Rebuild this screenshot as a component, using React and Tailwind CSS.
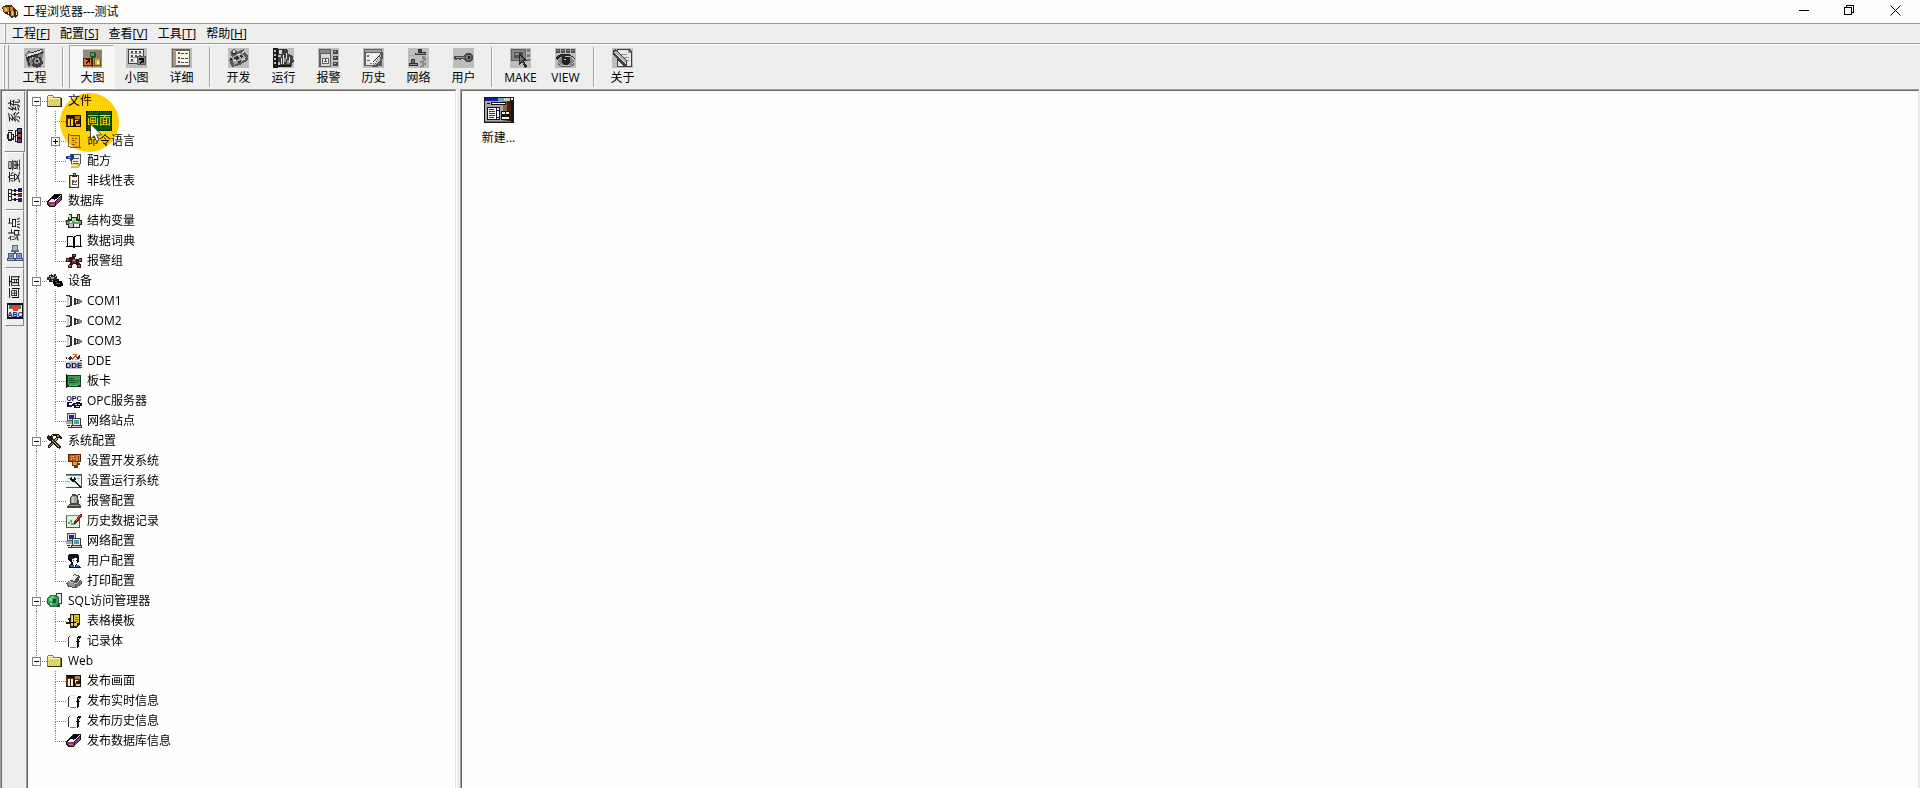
import { useState } from "react";
import clsx from "clsx";

/* ---------- 16px tree icons ---------- */

const glyphs = {
    folder: (
        <>
            <path d="M0 3l1-1h5l1 2h7v10H0z" fill="#8a7a20" />
            <path d="M1 3h4l1 2h7v8H1z" fill="#e8d878" />
            <path d="M1 3h4l1 1H1zM1 5h12v1H1z" fill="#fff6b8" />
            <path d="M3 7h1v1H3zM5 7h1v1H5zM7 7h1v1H7zM9 7h1v1H9zM11 7h1v1h-1zM2 9h1v1H2zM4 9h1v1H4zM6 9h1v1H6zM8 9h1v1H8zM10 9h1v1h-1zM3 11h1v1H3zM5 11h1v1H5zM7 11h1v1H7zM9 11h1v1H9zM11 11h1v1h-1z" fill="#c8b850" />
            <path d="M14 5h1v9H1v-1h13z" fill="#302808" />
        </>
    ),
    picture: (
        <>
            <path d="M0 2h15v12H0z" fill="#5a3418" />
            <path d="M1 3h8v2H1z" fill="#1c1008" />
            <path d="M2 6h2v7H2zM5 6h2v7H5z" fill="#fff4e0" />
            <path d="M4 7h1v6H4z" fill="#30180c" />
            <path d="M9 3h5v3H9z" fill="#b88050" />
            <path d="M7 6h2v7H7z" fill="#140c04" />
            <path d="M9 7h3v3H9z" fill="#fff4e0" />
            <path d="M10 8h4v3h-4z" fill="#382010" />
            <path d="M10 11h4v2h-4z" fill="#f0c898" />
            <path d="M0 13h15v1H0zM14 2h1v12h-1zM0 2h15v1H0z" fill="#100800" />
        </>
    ),
    script: (
        <>
            <path d="M2 1h2v1h10v11l1 2H4v-1H2z" fill="#806838" />
            <path d="M4 3h9v10H4z" fill="#f4e4b0" />
            <path d="M3 2h1v11H3z" fill="#fff8d8" />
            <path d="M4 14h9v-1H4z" fill="#d8c080" />
            <path d="M6 5h2v1H6zM9 5h2v1H9zM6 7h3v1H6zM7 9h1v1H7zM9 9h2v1H9zM6 11h3v1H6z" fill="#8a6c30" />
        </>
    ),
    recipe: (
        <>
            <path d="M4 1h11v9l-2 5H5z" fill="#505050" />
            <path d="M6 2h8v8l-2 4H6z" fill="#f0ecd0" />
            <path d="M8 5h5v1H8zM7 8h5v1H7zM7 10h6v1H7z" fill="#506090" />
            <path d="M0 3h3l3-2 2 2v3L5 8 3 6H0z" fill="#1c3c88" />
            <path d="M2 4h3v1H2z" fill="#70b0e8" />
            <path d="M5 11h7l2 2-2 2H5z" fill="#d8c070" />
            <path d="M5 12h6v1H5z" fill="#fff8d0" />
        </>
    ),
    clipboard: (
        <>
            <path d="M3 2h10v13H3z" fill="#403020" />
            <path d="M4 3h8v11H4z" fill="#f8f8f0" />
            <path d="M4 3h1v11H4z" fill="#d0b070" />
            <path d="M7 0h3v2h1v2H6V2h1z" fill="#303030" />
            <path d="M8 1h1v1H8z" fill="#fff" />
            <path d="M6 7h1v5H6zM6 11h5v1H6z" fill="#50507c" />
            <path d="M7 7h1v1h1v1H8v1H7zM10 7h1v2h-1v1H9V8h1z" fill="#a04868" />
        </>
    ),
    database: (
        <>
            <path d="M7 1h8v5l-7 8H2l-2-2v-3z" fill="#180818" />
            <path d="M1 9h7v4H3l-2-2z" fill="#883878" />
            <path d="M9 9l5-6v3l-5 7z" fill="#903c80" />
            <path d="M1 9l4-4 2 2 5-5h2L8 9z" fill="#f8f0f8" />
            <path d="M7 2h6L9 6H4z" fill="#000" />
            <path d="M3 11h4v1H3z" fill="#c07868" />
        </>
    ),
    struct: (
        <>
            <path d="M3 1h3v3h5V1h3v6h2v5h-2v3H2v-3H0V7h2V4h1z" fill="#202820" />
            <path d="M3 2h2v4H3zM12 2h1v4h-1z" fill="#d8e070" />
            <path d="M1 8h14v3H1z" fill="#50a868" />
            <path d="M4 8h2v2H4zM9 8h3v1H9z" fill="#e8f0e0" />
            <path d="M3 11h4v3H3z" fill="#d8b8c8" />
            <path d="M8 11h5v3H8z" fill="#f0f0f0" />
            <path d="M6 5h4v3H6z" fill="#a8d8b0" />
            <path d="M6 2h4v2H6z" fill="#fefefc" />
        </>
    ),
    book: (
        <>
            <path d="M1 3h5l1 1 1-1h1l1-1h4l1 1v10h1v1H9v1H7v-1H0v-1h1z" fill="#000" />
            <path d="M2 4h4l1 1v8H2zM9 4l1-1h3l1 1v9H9z" fill="#fff" />
            <path d="M3 12h3v1H3zM10 12h3v1h-3z" fill="#b0b0b0" />
        </>
    ),
    group: (
        <>
            <path d="M6 1h4v3H9v2h4V5h3v4h-3v1l2 2v3h-4v-3l-2-1H7l-1 1v3H2v-3l2-2V9H0V5h3V4h3z" fill="#301018" />
            <path d="M7 2h2v1H7zM1 6h2v2H1zM13 6h2v2h-2zM3 12h2v2H3zM12 12h2v2h-2z" fill="#a06070" />
            <path d="M6 6h4v4H6z" fill="#783040" />
            <path d="M7 7h2v1H7z" fill="#e0a0a8" />
        </>
    ),
    device: (
        <>
            <path d="M2 2h2V1h1v1h2V1h2v2h1v4H8v2H2V7H0V4h2z" fill="#282828" />
            <path d="M4 4h3v2H4zM2 5h1v1H2zM6 2h1v1H6z" fill="#a0a0a0" />
            <path d="M3 3h1v1H3zM8 3h1v1H8zM5 7h1v1H5z" fill="#d0d0d0" />
            <path d="M7 7h3V6h2v2h3v2h1v3h-2v1h-4v-1H7v-2H6V9h1z" fill="#000" />
            <path d="M9 10h4v1H9z" fill="#707070" />
            <path d="M8 8h2v1H8z" fill="#505050" />
        </>
    ),
    com: (
        <>
            <path d="M0 2h4v1h2v10H4v1H0v-1h1V3H0z" fill="#303030" />
            <path d="M1 3h2v10H1z" fill="#d0d0d0" />
            <path d="M3 4h1v8H3z" fill="#f8f8f8" />
            <path d="M8 5h2v1h2v1h1v3h-1v1h-2v1H8z" fill="#303030" />
            <path d="M10 7h1v3h-1z" fill="#f0f0f0" />
            <path d="M12 6h2v1h2v3h-2v1h-2z" fill="#808080" />
        </>
    ),
    dde: (
        <>
            <path d="M2 5l2-2 2 2-2 3zM12 3l2-1v2l-1 3-2-1z" fill="#303020" />
            <path d="M5 6l4-4 1 1-3 4zM7 1h4v4h-1V2H7z" fill="#d05818" />
            <path d="M9 6h4v1H9zM13 5h2v1h-2z" fill="#d8b040" />
            <path d="M0 4h1v2H0zM14 7h2v1h-2z" fill="#202050" />
            <path d="M1 9h1V8h13v1h1v6h-1v1H1z" fill="#c8c8d8" />
            <text x="8" y="15" textAnchor="middle" fontSize="8" fontWeight="700" fontFamily="Liberation Sans, sans-serif" fill="#08083c">DDE</text>
        </>
    ),
    board: (
        <>
            <path d="M0 1h1v14H0z" fill="#101010" />
            <path d="M1 2h14v12H1z" fill="#0c4018" />
            <path d="M2 3h12v9H2z" fill="#38a048" />
            <path d="M3 5h5v1H3zM3 7h7v1H3zM3 9h6v1H3zM10 9l3-3v1l-3 3z" fill="#184c20" />
            <path d="M3 12h9v1H3z" fill="#78b850" />
        </>
    ),
    opc: (
        <>
            <path d="M1 9h5v1H3v3h3v1H1zM7 10h3V9h4v1h2v3h-2v2H8v-2H6v-2h1z" fill="#101030" />
            <path d="M9 11h2v1H9zM12 11h2v1h-2zM10 13h3v1h-3z" fill="#d8d8e0" />
            <path d="M2 12h4v2H2z" fill="#18205c" />
            <text x="8" y="8" textAnchor="middle" fontSize="7" fontWeight="700" fontFamily="Liberation Sans, sans-serif" fill="#08083c">OPC</text>
        </>
    ),
    network: (
        <>
            <path d="M1 0h9v8H1z" fill="#485058" />
            <path d="M2 1h7v6H2z" fill="#e0e0e0" />
            <path d="M3 2h5v4H3z" fill="#1828a0" />
            <path d="M0 8h6v3H0z" fill="#a0a8a8" />
            <path d="M6 5h9v8H6z" fill="#384048" />
            <path d="M7 6h7v6H7z" fill="#e8e8e0" />
            <path d="M8 7h5v4H8z" fill="#50a0a8" />
            <path d="M5 12h11v3H5z" fill="#384040" />
            <path d="M6 13h9v1H6z" fill="#c8c8c0" />
            <path d="M1 12h3v1H1zM2 14h3v1H2z" fill="#202020" />
        </>
    ),
    tools: (
        <>
            <path d="M5 1h5l3 1 2 3-1 2-2-2h-2L9 3 6 3z" fill="#181408" />
            <path d="M10 2h2v2h-2z" fill="#908040" />
            <path d="M9 4l2 2-8 9H1v-2z" fill="#282010" />
            <path d="M9 5l1 1-7 8H2z" fill="#b8a060" />
            <path d="M1 2l2 2 1-2 2 1v3l8 8-1 2-3-1-6-7H2L0 5z" fill="#202020" />
            <path d="M5 7l8 7h-1L5 8z" fill="#b8b8a0" />
        </>
    ),
    devset: (
        <>
            <path d="M2 1h13v8H2z" fill="#5c2008" />
            <path d="M3 2h7v6H3z" fill="#c85020" />
            <path d="M5 3h3v1H5zM5 5h1v2H5zM7 5h2v1H7z" fill="#f0b040" />
            <path d="M10 2h4v6h-4z" fill="#e08830" />
            <path d="M12 3h1v5h-1z" fill="#80380c" />
            <path d="M6 8h6v2h2v2h-2v3H8v-2H6z" fill="#6c3c08" />
            <path d="M7 9h4v3H7z" fill="#e0a040" />
        </>
    ),
    runset: (
        <>
            <path d="M0 1h16v14H0z" fill="#405858" />
            <path d="M0 2h15v12H0z" fill="#ecf6f0" />
            <path d="M0 2h15v1H0z" fill="#58a088" />
            <path d="M2 5h2v1H2zM1 8h3v1H1zM11 5h3v1h-3z" fill="#80b8a0" />
            <path d="M5 4h1v2h2V4h1l1 2-1 2 6 6-1 1L8 9H6L4 7z" fill="#101010" />
        </>
    ),
    bell: (
        <>
            <path d="M6 1h4v1h2v2l1 6 2 3v2H1v-2l3-3V4l2-2z" fill="#484440" />
            <path d="M6 3h4v1h1v6H5V4h1z" fill="#a8a498" />
            <path d="M6 4h2v6H6z" fill="#d0ccc0" />
            <path d="M3 12h10v1H3z" fill="#a89868" />
            <path d="M12 1h2v1h-2zM14 3h1v2h-1z" fill="#282828" />
        </>
    ),
    history: (
        <>
            <path d="M0 2h14v13H0z" fill="#486050" />
            <path d="M1 3h12v11H1z" fill="#dcf4dc" />
            <path d="M0 2h13v1H0z" fill="#58a878" />
            <path d="M2 9h2V7h2v3h2V8h3v1H9v3H5V9H4v2H2z" fill="#60a880" />
            <path d="M14 1h2v2l-6 8H8V9z" fill="#702018" />
            <path d="M14 2h1l-5 7V8z" fill="#d86040" />
        </>
    ),
    user: (
        <>
            <path d="M3 1h9l1 2v6h-1v1h-1v2h2l2 3H3v-3l2-2-1-3-1 1-1-2V3z" fill="#101418" />
            <path d="M6 5h5v5l-2 2H7z" fill="#fff" />
            <path d="M5 4h3v2H5zM7 7h1v1H7zM10 7h1v1h-1z" fill="#202020" />
            <path d="M4 12h3l1 2H4zM10 12h3v2h-3z" fill="#3868a8" />
            <path d="M8 12h1v2H8z" fill="#fff" />
        </>
    ),
    printer: (
        <>
            <path d="M8 1l6 2-1 4 3 1v3l-6 4-8-1-2-4 5-3z" fill="#505050" />
            <path d="M8 2l4 1-3 5-4-1z" fill="#e8e8e8" />
            <path d="M1 9l8 2v3l-6-1z" fill="#989898" />
            <path d="M10 11l5-3v3l-5 3z" fill="#707070" />
            <path d="M3 8l7 2 4-3v1l-4 3-8-2z" fill="#d0d0d0" />
            <path d="M11 4h1v1h-1zM9 6h1v1H9z" fill="#303030" />
        </>
    ),
    sql: (
        <>
            <path d="M9 0h6v11h-2v3H9z" fill="#304048" />
            <path d="M10 1h4v9h-4z" fill="#d8e8f0" />
            <path d="M3 2h7l2 3v6l-3 3H3l-3-3V5z" fill="#306048" />
            <path d="M3 3h6l2 3v4l-2 3H4l-3-3V6z" fill="#30a850" />
            <path d="M2 5h3v3H2zM4 3h3v2H4z" fill="#88c0c8" />
            <path d="M6 6h3v4H6z" fill="#105828" />
            <path d="M3 10h2v2H3z" fill="#98d890" />
        </>
    ),
    template: (
        <>
            <path d="M4 1h10v10l-3 4H4v-4H0V9h3V7H2V5h2z" fill="#282008" />
            <path d="M5 2h8v8h-2v3H5z" fill="#e8c840" />
            <path d="M9 4h3v1H9zM9 6h4v1H9zM9 8h3v1H9z" fill="#907818" />
            <path d="M6 3h1v9H6z" fill="#fff8b0" />
            <path d="M7 1h1v14H7zM4 9h6v1H4z" fill="#000" />
        </>
    ),
    record: (
        <>
            <path d="M2 4h1v10H2zM3 3h1v1H3z" fill="#303030" />
            <path d="M4 14h6v1H4z" fill="#808080" />
            <path d="M11 4h1V3h3v2h-1v1h-1v2h1v1h-1v5h-1v1h-1V9h-1V8h1z" fill="#101010" />
            <path d="M12 5h1v1h-1z" fill="#fff" />
            <path d="M4 3h6V2H4z" fill="#e0e0e0" />
        </>
    ),
    tabSystem: (
        <>
            <path d="M1 4h4v2h2v6H5v1H1v-2H0V6h1z" fill="#202020" />
            <path d="M2 5h2v6H2zM5 7h1v3H5z" fill="#e8e8e8" />
            <path d="M1 2h5v1H1zM6 8h2V2h3v1H9v4h2v1H9v5h2v1H8V9H6z" fill="#202020" />
            <path d="M10 0h5v5h-5zM10 5h5v5h-5zM10 10h5v5h-5z" fill="#181020" />
            <path d="M11 1h3v3h-3z" fill="#4858b0" />
            <path d="M11 6h3v3h-3z" fill="#b84840" />
            <path d="M11 11h3v3h-3z" fill="#783888" />
        </>
    ),
    tabVariable: (
        <>
            <path d="M1 2h4v12H1zM5 3h7v1H5zM5 7h7v1H5zM5 12h7v1H5z" fill="#282828" />
            <path d="M2 3h2v3H2zM2 7h2v2H2zM2 10h2v3H2z" fill="#f0f0f0" />
            <path d="M7 2h2v3H7zM7 6h2v3H7zM7 11h2v3H7z" fill="#181818" />
            <path d="M11 1h4v4h-4z" fill="#182060" />
            <path d="M11 6h4v4h-4z" fill="#802028" />
            <path d="M11 11h4v4h-4z" fill="#202868" />
        </>
    ),
    tabStation: (
        <>
            <path d="M5 0h6v5h1v2H4V5h1z" fill="#587080" />
            <path d="M6 1h4v4H6z" fill="#98c0c8" />
            <path d="M7 7h2v2H7z" fill="#505860" />
            <path d="M1 8h6v5h1v3H0v-3h1zM9 8h6v5h1v3H8v-3h1z" fill="#485080" />
            <path d="M2 9h4v4H2zM10 9h4v4h-4z" fill="#90a8c8" />
            <path d="M3 10h2v2H3zM11 10h2v2h-2z" fill="#5068a0" />
            <path d="M1 14h6v1H1zM9 14h6v1H9z" fill="#b8c0d0" />
        </>
    ),
    tabPicture: (
        <>
            <path d="M0 0h16v16H0z" fill="#101028" />
            <path d="M1 2h14v12H1z" fill="#f0f0f8" />
            <path d="M2 2h12v4H2z" fill="#309048" />
            <path d="M5 3h7v3h-1v2H6V6H5z" fill="#d84828" />
            <text x="8" y="14" textAnchor="middle" fontSize="7" fontWeight="700" fontFamily="Liberation Sans, sans-serif" fill="#101878">ABC</text>
        </>
    ),
    app: (
        <>
            <path d="M0 3l4-2h6l2 3 2 1 2 3v3l-2 3-2-1-3 1-2-3-4-1-2-3z" fill="#50300c" />
            <path d="M1 3h6v5H2z" fill="#c88020" />
            <path d="M3 4h2v3H3z" fill="#f0c868" />
            <path d="M8 3h3v4H8z" fill="#c88828" />
            <path d="M9 7h4v5H9z" fill="#d09030" />
            <path d="M10 8h1v3h-1zM14 7h1v4h-1zM6 8h1v2H6z" fill="#fae0a0" />
            <path d="M7 4h1v6H7zM5 8h1v2H5zM12 6h1v7h-1z" fill="#301800" />
        </>
    ),
};

function Glyph({ name }) {
    return (
        <svg className="size-4 shrink-0" viewBox="0 0 16 16" shapeRendering="crispEdges" aria-hidden="true">
            {glyphs[name]}
        </svg>
    );
}

/* ---------- toolbar icons, grey face ---------- */

const toolGlyphs = {
    project: (
        <>
            <path d="M1 6l3-3 4 1 11-3 1 4-4 11-12 3z" fill="#808080" />
            <path d="M3 6l15-4-3 5-12 5z" fill="#d8d8d8" />
            <path d="M2 9l17-5v1L5 11l1 7H5z" fill="#303030" />
            <path d="M4 3l4 1 10-3v1L8 5 4 4z" fill="#404040" />
            <path d="M11 7h3v2h2l2 1-1 2 2 1v3l-2 1v2h-3l-1 1-2-1H9l-1-2 1-2-1-2 1-2 2-1z" fill="#404040" />
            <path d="M11 10h4v2h1v3h-2v1h-3v-1h-1v-3h1z" fill="#989898" />
            <path d="M12 12h2v2h-2z" fill="#202020" />
        </>
    ),
    large: (
        <>
            <path d="M1 1h19v18H1z" fill="#988c78" />
            <path d="M12 1h8v9h-8z" fill="#907c60" />
            <path d="M8 3h5v1h1v4h-1v1H9V8H8z" fill="#185828" />
            <path d="M9 4h3v3H9z" fill="#40a858" />
            <path d="M10 9h1v10h-1zM1 10h19v1H1z" fill="#302010" />
            <path d="M1 9h9v9H1z" fill="#682010" />
            <path d="M2 10h7v7H2z" fill="#e07038" />
            <path d="M4 11h4v4H7v-2l-3 3v-2l2-2H4z" fill="#100800" />
            <path d="M12 10h7v8h-7z" fill="#705010" />
            <path d="M13 11h5v6h-5z" fill="#d8b040" />
            <path d="M15 13h2v3h-2z" fill="#fff0a0" />
        </>
    ),
    small: (
        <>
            <path d="M2 1h16v15H2z" fill="#404040" />
            <path d="M3 2h14v13H3z" fill="#ececec" />
            <path d="M5 3h2v2H5zM9 3h2v2H9zM13 3h2v2h-2zM5 7h2v2H5zM9 7h2v2H9zM5 11h2v2H5zM13 7h2v2h-2z" fill="#505050" />
            <path d="M4 5h4v1H4zM8 5h4v1H8zM12 5h4v1h-4zM4 9h8v1H4zM4 13h4v1H4z" fill="#a0a0a0" />
            <path d="M11 8h9v9h-9z" fill="#585858" />
            <path d="M12 9h7v7h-7z" fill="#888" />
            <path d="M13 10h5v5h-1v-2l-3 3v-2l2-2h-3z" fill="#000" />
        </>
    ),
    detail: (
        <>
            <path d="M1 1h18v18H1z" fill="#686460" />
            <path d="M5 3h13v14H5z" fill="#f8f4ec" />
            <path d="M2 2h3v16H2z" fill="#a89880" />
            <path d="M7 4h2v2H7zM7 9h2v2H7z" fill="#904838" />
            <path d="M7 13h2v2H7z" fill="#385078" />
            <path d="M10 5h3v1h-3zM14 5h3v1h-3zM10 10h3v1h-3zM14 10h3v1h-3zM10 14h3v1h-3zM14 14h3v1h-3z" fill="#484848" />
        </>
    ),
    develop: (
        <>
            <path d="M2 4l4-3 3 3 7-3 1 4 3 2v5l-8 5-8 2-3-7 3-3z" fill="#585858" />
            <path d="M4 9l8-4 6 4-5 5-7 3z" fill="#a8a8a8" />
            <path d="M6 9l3-1 2 2-2 2-3-1zM12 7l3 1-1 2-2-1zM10 13l3-1v2l-3 1z" fill="#303030" />
            <path d="M5 12h3v1H5zM9 6h3v1H9zM14 11h3v1h-3z" fill="#e8e8e8" />
            <path d="M5 2h2v3H5zM16 2l1 1-3 3-1-1z" fill="#d0d0d0" />
            <path d="M4 5h4v1H4zM2 10h2v2H2z" fill="#202020" />
        </>
    ),
    run: (
        <>
            <path d="M0 0h5v20H0z" fill="#181818" />
            <path d="M1 2h2v2H1zM1 6h2v2H1zM1 10h2v2H1zM1 14h2v2H1z" fill="#c0c0c0" />
            <path d="M5 1h9v6H5z" fill="#383838" />
            <path d="M6 2h3v4H6z" fill="#d0d0d0" />
            <path d="M10 5h2V2h3v4l3 1 2 1v3l1 2-2 2v3H7v-4H5V9h3V6z" fill="#404040" />
            <path d="M10 7h1v9h-1zM13 5h1v6h-1zM16 9h1v6h-1zM8 10h1v6H8z" fill="#d8d8d8" />
            <path d="M11 10h2v4h-2zM14 12h2v4h-2z" fill="#909090" />
            <path d="M5 17h13v2H5z" fill="#181818" />
        </>
    ),
    alarm: (
        <>
            <path d="M1 1h12v18H1z" fill="#606060" />
            <path d="M2 2h10v3H2z" fill="#888" />
            <path d="M3 6h9v12H3z" fill="#d8d8d8" />
            <path d="M4 10h7v6H4z" fill="#606060" />
            <path d="M5 11h5v4H5z" fill="#f4f4f4" />
            <path d="M7 11h1v3H7zM6 13h3v1H6z" fill="#484848" />
            <path d="M15 2h5v4h-5zM15 8h5v4h-5zM15 14h5v4h-5z" fill="#484848" />
            <path d="M16 3h2v1h-2zM16 9h2v1h-2zM16 15h2v1h-2z" fill="#b0b0b0" />
        </>
    ),
    trend: (
        <>
            <path d="M1 1h18v17H1z" fill="#606060" />
            <path d="M3 5h14v12H3z" fill="#e8e8e8" />
            <path d="M2 2h16v2H2z" fill="#a0a0a0" />
            <path d="M4 7h2v2H4zM4 12h3v1H4zM7 15h4v1H7z" fill="#707070" />
            <path d="M9 6h4v1h3l-4 6-2 3-3-1V9z" fill="#f4f4f4" />
            <path d="M19 4h1v6l-2 5-4 4H9l4-5z" fill="#585858" />
            <path d="M18 6l-1 6-5 5 2-4z" fill="#c8c8c8" />
            <path d="M17 7l-7 7 1-2z" fill="#202020" />
        </>
    ),
    net: (
        <>
            <path d="M10 1h4v3h4v3H7V5h3z" fill="#383838" />
            <path d="M8 5h9v1H8z" fill="#888" />
            <path d="M3 11h4v4h3v3H1v-3h2z" fill="#303030" />
            <path d="M4 12h2v3H4z" fill="#707070" />
            <path d="M14 8h3v2h1v3h-2v2h2v2h-2v2h-4v-1h2v-3h-2v-2h3v-2h-1z" fill="#888" />
            <path d="M2 16h7v1H2z" fill="#909090" />
            <path d="M1 7h5v1H1z" fill="#a8a8a8" />
        </>
    ),
    key: (
        <>
            <path d="M13 5h4l3 2v5l-3 2h-4l-2-3H8v1H6v-1H4v1H2v-1H1V8h10z" fill="#484848" />
            <path d="M13 7h5v5h-5z" fill="#787878" />
            <path d="M3 9h9v1H3z" fill="#989898" />
            <path d="M15 8h2v3h-2z" fill="#282828" />
        </>
    ),
    make: (
        <>
            <path d="M1 1h15v12H1z" fill="#606060" />
            <path d="M2 2h13v10H2z" fill="#888" />
            <path d="M4 4h9v6H4z" fill="#505050" />
            <path d="M5 5h5v2H5z" fill="#909090" />
            <path d="M17 1h3v3h-3zM17 6h3v3h-3zM17 11h3v2h-3z" fill="#787878" />
            <path d="M9 5l8 8h-3l3 5-2 2-3-6-3 3z" fill="#282828" />
            <path d="M10 8l4 4h-2l3 6-3-5-2 1z" fill="#707070" />
        </>
    ),
    view: (
        <>
            <path d="M1 1h4v4H1zM6 1h4v4H6zM11 1h4v4h-4zM16 1h4v4h-4z" fill="#505050" />
            <path d="M2 2h2v1H2zM7 2h2v1H7zM12 2h2v1h-2zM17 2h2v1h-2z" fill="#909090" />
            <path d="M1 9l5-3h8l6 4v2l-3-3-3-1-8 1-4 3z" fill="#282828" />
            <path d="M2 13l4-4h9l4 4-4 4H7z" fill="#808080" />
            <path d="M7 9h8v6l-3 2H9l-2-3z" fill="#202020" />
            <path d="M9 11h2v1H9z" fill="#d0d0d0" />
            <path d="M3 15l4 3h8l4-3v2l-4 2H7l-4-2z" fill="#606060" />
        </>
    ),
    about: (
        <>
            <path d="M5 1h12l3 3v15H5z" fill="#404040" />
            <path d="M6 2h10v3h3v13H6z" fill="#e8e8e8" />
            <path d="M16 2v3h3z" fill="#909090" />
            <path d="M9 6h6v1H9zM11 9h6v1h-6zM13 12h4v1h-4z" fill="#909090" />
            <path d="M1 2l3-1 11 12v5h-4L1 6z" fill="#404040" />
            <path d="M2 4l2-2 10 11-2 2z" fill="#b0b0b0" />
            <path d="M3 4l9 10h-1L2 5zM12 15l2-2v4z" fill="#e0e0e0" />
        </>
    ),
};

const toolGroups = [
    [{ id: "project", label: "工程" }],
    [
        { id: "large", label: "大图" },
        { id: "small", label: "小图" },
        { id: "detail", label: "详细" },
    ],
    [
        { id: "develop", label: "开发" },
        { id: "run", label: "运行" },
        { id: "alarm", label: "报警" },
        { id: "trend", label: "历史" },
        { id: "net", label: "网络" },
        { id: "key", label: "用户" },
    ],
    [
        { id: "make", label: "MAKE" },
        { id: "view", label: "VIEW" },
    ],
    [{ id: "about", label: "关于" }],
];

const menus = [
    { label: "工程", accel: "F" },
    { label: "配置", accel: "S" },
    { label: "查看", accel: "V" },
    { label: "工具", accel: "T" },
    { label: "帮助", accel: "H" },
];

const sideTabs = [
    { label: "系统", icon: "tabSystem" },
    { label: "变量", icon: "tabVariable" },
    { label: "站点", icon: "tabStation" },
    { label: "画面", icon: "tabPicture" },
];

const tree = [
    {
        label: "文件",
        icon: "folder",
        children: [
            { label: "画面", icon: "picture" },
            { label: "命令语言", icon: "script", collapsed: true },
            { label: "配方", icon: "recipe" },
            { label: "非线性表", icon: "clipboard" },
        ],
    },
    {
        label: "数据库",
        icon: "database",
        children: [
            { label: "结构变量", icon: "struct" },
            { label: "数据词典", icon: "book" },
            { label: "报警组", icon: "group" },
        ],
    },
    {
        label: "设备",
        icon: "device",
        children: [
            { label: "COM1", icon: "com" },
            { label: "COM2", icon: "com" },
            { label: "COM3", icon: "com" },
            { label: "DDE", icon: "dde" },
            { label: "板卡", icon: "board" },
            { label: "OPC服务器", icon: "opc" },
            { label: "网络站点", icon: "network" },
        ],
    },
    {
        label: "系统配置",
        icon: "tools",
        children: [
            { label: "设置开发系统", icon: "devset" },
            { label: "设置运行系统", icon: "runset" },
            { label: "报警配置", icon: "bell" },
            { label: "历史数据记录", icon: "history" },
            { label: "网络配置", icon: "network" },
            { label: "用户配置", icon: "user" },
            { label: "打印配置", icon: "printer" },
        ],
    },
    {
        label: "SQL访问管理器",
        icon: "sql",
        children: [
            { label: "表格模板", icon: "template" },
            { label: "记录体", icon: "record" },
        ],
    },
    {
        label: "Web",
        icon: "folder",
        children: [
            { label: "发布画面", icon: "picture" },
            { label: "发布实时信息", icon: "record" },
            { label: "发布历史信息", icon: "record" },
            { label: "发布数据库信息", icon: "database" },
        ],
    },
];

function TitleBar() {
    return (
        <header className="flex h-6 shrink-0 items-start justify-between border-b border-[#999] bg-[#fefefc]">
            <div className="flex items-center gap-[5px] pt-[2px] pl-[2px]">
                <Glyph name="app" />
                <h1 className="text-[12px] leading-5">工程浏览器---测试</h1>
            </div>
            <div className="flex pr-[2px]">
                <button type="button" aria-label="最小化" className="flex h-5 w-[46px] items-center justify-center">
                    <svg width="11" height="11" viewBox="0 0 11 11" shapeRendering="crispEdges">
                        <path d="M1 5h10v1H1z" />
                    </svg>
                </button>
                <button type="button" aria-label="还原" className="flex h-5 w-[46px] items-center justify-center">
                    <svg width="11" height="11" viewBox="0 0 11 11" fill="none" stroke="#000" shapeRendering="crispEdges">
                        <path d="M.5 2.5h7v7h-7zM2.5 2.5v-2h7v7h-2" />
                    </svg>
                </button>
                <button type="button" aria-label="关闭" className="flex h-5 w-[46px] items-center justify-center">
                    <svg width="11" height="11" viewBox="0 0 11 11" fill="none" stroke="#000">
                        <path d="M.5.5l10 10M10.5.5l-10 10" />
                    </svg>
                </button>
            </div>
        </header>
    );
}

function MenuBar() {
    return (
        <nav className="flex h-5 shrink-0 items-center border-b border-[#999] pl-1">
            <span className="h-full w-[2px] border-r border-[#a0a0a0] bg-white" />
            <div className="flex gap-[10px] pl-[6px]">
                {menus.map((menu) => (
                    <button key={menu.accel} type="button" className="text-[12px] leading-4">
                        {menu.label}[<u>{menu.accel}</u>]
                    </button>
                ))}
            </div>
        </nav>
    );
}

function Toolbar({ mode, setMode }) {
    const handleClick = (id) => {
        if (id === "large" || id === "small" || id === "detail") {
            setMode(id);
        }
    };

    return (
        <div className="flex h-[45px] shrink-0 border-t border-white pl-[3px]">
            <span className="mr-[3px] w-[2px] border-r border-[#a0a0a0] bg-white" />
            <span className="mr-[3px] w-[1px] border-r border-[#a0a0a0]" />
            {toolGroups.map((group, i) => (
                <div key={group[0].id} className="flex">
                    {i > 0 && <span className="mx-[5px] my-[2px] w-[2px] border-l border-[#a0a0a0] bg-white" />}
                    {group.map((tool) => (
                        <button
                            key={tool.id}
                            type="button"
                            onClick={() => handleClick(tool.id)}
                            className={clsx(
                                "flex w-[45px] flex-col items-center border",
                                mode === tool.id
                                    ? "border-t-[#a0a0a0] border-r-white border-b-white border-l-[#a0a0a0] bg-[#f7f7f6] pt-[3px] pl-[2px]"
                                    : "border-transparent pt-[2px]"
                            )}
                        >
                            <svg className="h-5 w-[21px]" viewBox="0 0 21 20" shapeRendering="crispEdges" aria-hidden="true">
                                <path d="M0 0h21v20H0z" fill="#bdbdbb" />
                                {toolGlyphs[tool.id]}
                            </svg>
                            <span className="text-[12px] leading-5">{tool.label}</span>
                        </button>
                    ))}
                </div>
            ))}
        </div>
    );
}

function SideTabs() {
    const [active, setActive] = useState("系统");

    return (
        <div className="w-[26px] shrink-0 border-t border-l border-[#a0a0a0]">
            <div role="tablist" className="h-full border-t border-l border-[#696969] pl-[2px]">
                {sideTabs.map((tab) => (
                    <button
                        key={tab.label}
                        type="button"
                        role="tab"
                        aria-selected={active === tab.label}
                        onClick={() => setActive(tab.label)}
                        className={clsx(
                            "flex h-[58px] flex-col items-center justify-center gap-1 border-t border-r border-b border-l border-t-white border-r-[#888] border-b-[#888] border-l-white first:h-[61px]",
                            active === tab.label ? "w-[21px]" : "ml-px w-[19px]"
                        )}
                    >
                        <span className="rotate-180 text-[12px] leading-4 [text-orientation:sideways] [writing-mode:vertical-rl]">
                            {tab.label}
                        </span>
                        <Glyph name={tab.icon} />
                    </button>
                ))}
            </div>
        </div>
    );
}

function TreeNode({ node, first, last, selected, setSelected }) {
    const [open, setOpen] = useState(!node.collapsed);
    const expandable = node.children || node.collapsed;
    const isSelected = selected === node.label;

    return (
        <li>
            <div className="flex h-5 items-center">
                <span className="relative flex h-5 w-[11px] shrink-0 flex-col">
                    <span className={clsx("h-[11px] border-b border-dotted border-[#808080]", !first && "border-l")} />
                    <span className={clsx("flex-1 border-dotted border-[#808080]", !last && "border-l")} />
                    {expandable && (
                        <button
                            type="button"
                            aria-label={node.label}
                            aria-expanded={open}
                            onClick={() => setOpen(!open)}
                            className="absolute top-[6px] -left-1 flex size-[9px] items-center justify-center border border-[#808080] bg-[#fefefc]"
                        >
                            <svg width="5" height="5" viewBox="0 0 5 5" shapeRendering="crispEdges">
                                <path d={open ? "M0 2h5v1H0z" : "M0 2h5v1H0zM2 0h1v5H2z"} />
                            </svg>
                        </button>
                    )}
                </span>
                <Glyph name={node.icon} />
                <button
                    type="button"
                    onClick={() => setSelected(node.label)}
                    className={clsx(
                        "ml-1 h-5 px-px text-[12px] leading-5 whitespace-nowrap",
                        isSelected && "bg-[#0c6468] text-white outline-1 -outline-offset-1 outline-dotted outline-black"
                    )}
                >
                    {node.label}
                </button>
            </div>
            {node.children && open && (
                <ul className={clsx("border-l border-dotted pl-[18px]", last ? "border-transparent" : "border-[#808080]")}>
                    {node.children.map((child, i) => (
                        <TreeNode
                            key={child.label}
                            node={child}
                            last={i === node.children.length - 1}
                            selected={selected}
                            setSelected={setSelected}
                        />
                    ))}
                </ul>
            )}
        </li>
    );
}

function ProjectTree() {
    const [selected, setSelected] = useState("画面");

    return (
        <div className="w-[431px] shrink-0 border-t border-r border-l border-t-[#a0a0a0] border-r-white border-l-[#a0a0a0]">
            <div className="relative isolate h-full border-t border-r border-l border-t-[#696969] border-r-[#e3e3e3] border-l-[#696969] bg-[#fefefc]">
                <ul className="pl-2">
                    {tree.map((node, i) => (
                        <TreeNode
                            key={node.label}
                            node={node}
                            first={i === 0}
                            last={i === tree.length - 1}
                            selected={selected}
                            setSelected={setSelected}
                        />
                    ))}
                </ul>
                {/* Click highlight and pointer */}
                <span className="pointer-events-none absolute top-[2px] left-8 size-[59px] rounded-full bg-radial from-[#ffd60a] from-40% to-[#ffc800] mix-blend-multiply" />
                <svg className="pointer-events-none absolute top-8 left-[62px] h-[19px] w-3" viewBox="0 0 12 19">
                    <path d="M.5.8v15.4l3.6-3.4 2.5 5.6 2.4-1-2.4-5.5h4.9z" fill="#fff" stroke="#222" strokeWidth=".8" />
                </svg>
            </div>
        </div>
    );
}

function ContentPane() {
    return (
        <main className="mr-px ml-[3px] min-w-0 flex-1 border-t border-l border-[#a0a0a0]">
            <div className="h-full border-t border-r border-l border-t-[#696969] border-r-[#e3e3e3] border-l-[#696969] bg-[#fefefc] pt-[6px] pl-4">
                <button type="button" className="flex w-[41px] flex-col items-center gap-[7px]">
                    <svg className="h-[26px] w-[30px]" viewBox="0 0 30 26" shapeRendering="crispEdges" aria-hidden="true">
                        <path d="M0 0h30v26H0z" fill="#181818" />
                        <path d="M1 1h13v3H1z" fill="#1020a0" />
                        <path d="M14 1h6v3h-6z" fill="#60a8c0" />
                        <path d="M20 1h6v3h-6z" fill="#d0d0b8" />
                        <path d="M27 1h2v2h-2z" fill="#fff" />
                        <path d="M1 4h19v21H1z" fill="#a8a8a8" />
                        <path d="M19 4h4v21h-4z" fill="#806850" />
                        <path d="M23 4h4v21h-4z" fill="#4c2410" />
                        <path d="M3 6h3v1H3zM7 5h15v3H7z" fill="#101010" />
                        <path d="M8 6h13v1H8z" fill="#fff" />
                        <path d="M3 10h13v13H3z" fill="#101030" />
                        <path d="M4 11h8v11H4zM13 11h2v11h-2z" fill="#f8f8f8" />
                        <path d="M5 12h5v1H5zM5 14h6v1H5zM5 16h6v1H5zM5 18h6v1H5zM5 20h5v1H5z" fill="#283880" />
                        <path d="M13 13h2v1h-2zM13 20h2v1h-2z" fill="#101010" />
                        <path d="M17 14h9v5h-9zM17 19h9v4h-9z" fill="#101010" />
                        <path d="M18 15h3v2h-3zM22 15h3v2h-3zM18 20h7v2h-7z" fill="#f8f8f8" />
                        <path d="M1 24h26v1H1z" fill="#707070" />
                    </svg>
                    <span className="text-[12px] leading-4">新建...</span>
                </button>
            </div>
        </main>
    );
}

function App() {
    const [mode, setMode] = useState("large");

    return (
        <div className="flex h-screen flex-col overflow-hidden bg-[#eeeeed] font-['Open_Sans','Noto_Sans_CJK_SC',sans-serif] text-black">
            <TitleBar />
            <MenuBar />
            <Toolbar mode={mode} setMode={setMode} />
            <div className="flex min-h-0 flex-1">
                <SideTabs />
                <ProjectTree />
                <ContentPane />
            </div>
        </div>
    );
}

export default App;
